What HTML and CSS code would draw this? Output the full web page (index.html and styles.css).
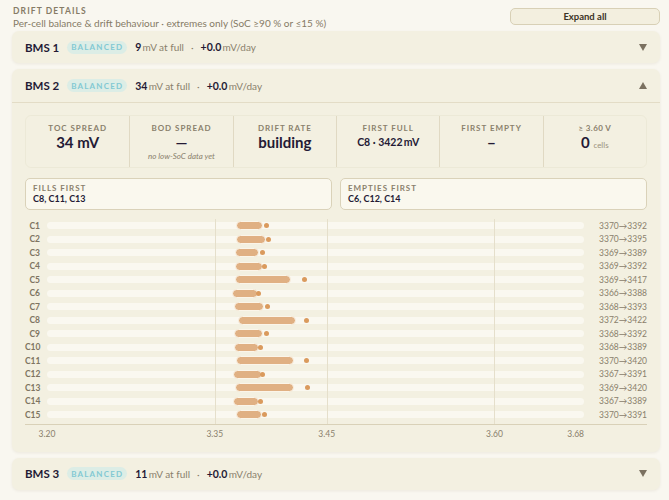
FILE: index.html
```html
<!DOCTYPE html>
<html lang="en">
<head>
    <meta charset="UTF-8">
    <meta name="viewport" content="width=device-width, initial-scale=1.0">
    <title>Drift details</title>
    <link rel="stylesheet" href="styles.css">
</head>
<body>
<section class="drift">
    <div class="drift-head">
        <div>
            <div class="eyebrow">Drift details</div>
            <div class="subtitle">Per-cell balance &amp; drift behaviour · extremes only (SoC ≥90 % or ≤15 %)</div>
        </div>
        <button class="expand-btn">Expand all</button>
    </div>

    <!-- BMS 1 (collapsed) -->
    <div class="bms-card">
        <div class="bms-header">
            <span class="bms-name">BMS 1</span>
            <span class="badge">BALANCED</span>
            <span class="metric"><b>9</b>&#8201;mV at full</span>
            <span class="sep">·</span>
            <span class="metric"><b>+0.0</b>&#8201;mV/day</span>
            <svg class="chevron" width="8" height="7" viewBox="0 0 8 7"><polygon points="0,0 8,0 4,7"/></svg>
        </div>
    </div>

    <!-- BMS 2 (expanded) -->
    <div class="bms-card">
        <div class="bms-header open">
            <span class="bms-name">BMS 2</span>
            <span class="badge">BALANCED</span>
            <span class="metric"><b>34</b>&#8201;mV at full</span>
            <span class="sep">·</span>
            <span class="metric"><b>+0.0</b>&#8201;mV/day</span>
            <svg class="chevron" width="8" height="7" viewBox="0 0 8 7"><polygon points="0,7 8,7 4,0"/></svg>
        </div>
        <div class="bms-body">
            <div class="stats">
                <div class="stat">
                    <div class="stat-label">TOC spread</div>
                    <div class="stat-value">34 mV</div>
                </div>
                <div class="stat">
                    <div class="stat-label">BOD spread</div>
                    <div class="stat-value">—</div>
                    <div class="stat-note">no low-SoC data yet</div>
                </div>
                <div class="stat">
                    <div class="stat-label">Drift rate</div>
                    <div class="stat-value">building</div>
                </div>
                <div class="stat">
                    <div class="stat-label">First full</div>
                    <div class="stat-value small">C8 · 3422&#8201;mV</div>
                </div>
                <div class="stat">
                    <div class="stat-label">First empty</div>
                    <div class="stat-value dash">–</div>
                </div>
                <div class="stat">
                    <div class="stat-label plain">≥ 3.60 V</div>
                    <div class="stat-value">0 <span class="unit">cells</span></div>
                </div>
            </div>

            <div class="extremes">
                <div class="extreme">
                    <div class="extreme-label">Fills first</div>
                    <div class="extreme-cells">C8, C11, C13</div>
                </div>
                <div class="extreme">
                    <div class="extreme-label">Empties first</div>
                    <div class="extreme-cells">C6, C12, C14</div>
                </div>
            </div>

            <div class="chart">
                <div class="rows">
                    <div class="gridlines">
                        <span style="left: 31.25%"></span>
                        <span style="left: 52.083%"></span>
                        <span style="left: 83.333%"></span>
                    </div>
                    <div class="cell-row"><span class="cell-id">C1</span><div class="track"><div class="bar" style="left: 35.417%; width: 4.583%"></div><div class="dot" style="left: 40.833%"></div></div><span class="cell-range">3370→3392</span></div>
                    <div class="cell-row"><span class="cell-id">C2</span><div class="track"><div class="bar" style="left: 35.417%; width: 5.208%"></div><div class="dot" style="left: 41.25%"></div></div><span class="cell-range">3370→3395</span></div>
                    <div class="cell-row"><span class="cell-id">C3</span><div class="track"><div class="bar" style="left: 35.208%; width: 4.167%"></div><div class="dot" style="left: 40.208%"></div></div><span class="cell-range">3369→3389</span></div>
                    <div class="cell-row"><span class="cell-id">C4</span><div class="track"><div class="bar" style="left: 35.208%; width: 4.792%"></div><div class="dot" style="left: 40.417%"></div></div><span class="cell-range">3369→3392</span></div>
                    <div class="cell-row"><span class="cell-id">C5</span><div class="track"><div class="bar" style="left: 35.208%; width: 10%"></div><div class="dot" style="left: 47.917%"></div></div><span class="cell-range">3369→3417</span></div>
                    <div class="cell-row"><span class="cell-id">C6</span><div class="track"><div class="bar" style="left: 34.583%; width: 4.583%"></div><div class="dot" style="left: 39.375%"></div></div><span class="cell-range">3366→3388</span></div>
                    <div class="cell-row"><span class="cell-id">C7</span><div class="track"><div class="bar" style="left: 35%; width: 5.208%"></div><div class="dot" style="left: 41.042%"></div></div><span class="cell-range">3368→3393</span></div>
                    <div class="cell-row"><span class="cell-id">C8</span><div class="track"><div class="bar" style="left: 35.833%; width: 10.417%"></div><div class="dot" style="left: 48.333%"></div></div><span class="cell-range">3372→3422</span></div>
                    <div class="cell-row"><span class="cell-id">C9</span><div class="track"><div class="bar" style="left: 35%; width: 5%"></div><div class="dot" style="left: 40.833%"></div></div><span class="cell-range">3368→3392</span></div>
                    <div class="cell-row"><span class="cell-id">C10</span><div class="track"><div class="bar" style="left: 35%; width: 4.375%"></div><div class="dot" style="left: 39.792%"></div></div><span class="cell-range">3368→3389</span></div>
                    <div class="cell-row"><span class="cell-id">C11</span><div class="track"><div class="bar" style="left: 35.417%; width: 10.417%"></div><div class="dot" style="left: 48.333%"></div></div><span class="cell-range">3370→3420</span></div>
                    <div class="cell-row"><span class="cell-id">C12</span><div class="track"><div class="bar" style="left: 34.792%; width: 5%"></div><div class="dot" style="left: 40.208%"></div></div><span class="cell-range">3367→3391</span></div>
                    <div class="cell-row"><span class="cell-id">C13</span><div class="track"><div class="bar" style="left: 35.208%; width: 10.625%"></div><div class="dot" style="left: 48.542%"></div></div><span class="cell-range">3369→3420</span></div>
                    <div class="cell-row"><span class="cell-id">C14</span><div class="track"><div class="bar" style="left: 34.792%; width: 4.583%"></div><div class="dot" style="left: 39.792%"></div></div><span class="cell-range">3367→3389</span></div>
                    <div class="cell-row"><span class="cell-id">C15</span><div class="track"><div class="bar" style="left: 35.417%; width: 4.375%"></div><div class="dot" style="left: 40.417%"></div></div><span class="cell-range">3370→3391</span></div>
                </div>
                <div class="axis">
                    <div class="ticks">
                        <span style="left: 0%">3.20</span>
                        <span style="left: 31.25%">3.35</span>
                        <span style="left: 52.083%">3.45</span>
                        <span style="left: 83.333%">3.60</span>
                        <span class="last" style="left: 100%">3.68</span>
                    </div>
                </div>
            </div>
        </div>
    </div>

    <!-- BMS 3 (collapsed) -->
    <div class="bms-card">
        <div class="bms-header">
            <span class="bms-name">BMS 3</span>
            <span class="badge">BALANCED</span>
            <span class="metric"><b>11</b>&#8201;mV at full</span>
            <span class="sep">·</span>
            <span class="metric"><b>+0.0</b>&#8201;mV/day</span>
            <svg class="chevron" width="8" height="7" viewBox="0 0 8 7"><polygon points="0,0 8,0 4,7"/></svg>
        </div>
    </div>
</section>
</body>
</html>
```

FILE: styles.css
```css
body {
    margin: 0;
    background: #f9f7f0;
    font-family: Lato, "Open Sans", sans-serif;
    color: #261c36;
}
.drift {
    padding: 5px 9px 10px 12px;
}
.drift-head {
    display: flex;
    justify-content: space-between;
    align-items: flex-start;
    margin-bottom: 1px;
}
.eyebrow {
    font-size: 8.5px;
    line-height: 12px;
    font-weight: 700;
    letter-spacing: 0.13em;
    text-transform: uppercase;
    color: #867b66;
    padding-left: 1px;
}
.subtitle {
    font-size: 10px;
    line-height: 13px;
    color: #867b66;
    padding-left: 1px;
}
.expand-btn {
    margin-top: 3px;
    width: 150px;
    height: 17px;
    padding: 0;
    background: #f3efdf;
    border: 1px solid #d8d0b6;
    border-radius: 5px;
    font-family: inherit;
    font-size: 9.5px;
    font-weight: 700;
    color: #3b3326;
}
.bms-card {
    background: #f3f0e1;
    border-radius: 7px;
    box-shadow: 0 1px 3px rgba(90, 70, 30, 0.08);
    margin-bottom: 6px;
}
.bms-header {
    display: flex;
    align-items: center;
    height: 32px;
    padding: 0 13px;
}
.bms-header.open {
    height: 33px;
    border-bottom: 1px solid #e3dcc6;
}
.bms-name {
    font-size: 11.5px;
    font-weight: 700;
    color: #241a35;
    margin-right: 8px;
}
.badge {
    display: inline-flex;
    align-items: center;
    justify-content: center;
    width: 60px;
    height: 13px;
    border-radius: 7px;
    background: #dcede6;
    color: #82c9d3;
    font-size: 8px;
    font-weight: 700;
    letter-spacing: 0.15em;
    margin-right: 8px;
}
.metric {
    font-size: 10px;
    color: #8a806c;
}
.metric b {
    font-size: 10.5px;
    color: #241a35;
}
.sep {
    font-size: 10px;
    color: #8a806c;
    margin: 0 7px;
}
.chevron {
    margin-left: auto;
    fill: #7b7160;
}
.bms-body {
    padding: 12px 13px 12px;
}
.stats {
    display: grid;
    grid-template-columns: repeat(6, 1fr);
    height: 53px;
    border: 1px solid rgba(160, 140, 90, 0.07);
    border-radius: 6px;
    box-sizing: border-box;
}
.stat {
    display: flex;
    flex-direction: column;
    align-items: center;
    padding-top: 7px;
}
.stat + .stat {
    border-left: 1px solid #e0d9c3;
}
.stat-label {
    font-size: 8px;
    line-height: 10px;
    font-weight: 700;
    letter-spacing: 0.12em;
    text-transform: uppercase;
    color: #8a806c;
}
.stat-label.plain {
    letter-spacing: 0.05em;
}
.stat-value {
    font-size: 15px;
    line-height: 18px;
    font-weight: 700;
    color: #241a35;
}
.stat-value.small {
    font-size: 10.5px;
}
.stat-value.dash {
    font-size: 16px;
}
.stat-value .unit {
    font-size: 8px;
    font-weight: 400;
    color: #9a907c;
}
.stat-note {
    font-size: 8px;
    line-height: 10px;
    font-style: italic;
    color: #8a806c;
}
.extremes {
    display: grid;
    grid-template-columns: 1fr 1fr;
    gap: 8px;
    margin-top: 10px;
}
.extreme {
    background: #faf8ee;
    border: 1px solid #dad2b9;
    border-radius: 5px;
    padding: 4px 7px;
}
.extreme-label {
    font-size: 8px;
    line-height: 10px;
    font-weight: 700;
    letter-spacing: 0.12em;
    text-transform: uppercase;
    color: #8a806c;
}
.extreme-cells {
    font-size: 9px;
    line-height: 12px;
    font-weight: 700;
    color: #241a35;
}
.chart {
    margin-top: 9px;
}
.rows {
    position: relative;
    padding-bottom: 2px;
}
.gridlines {
    position: absolute;
    top: 0;
    bottom: 0;
    left: 22px;
    right: 63px;
    z-index: 1;
}
.gridlines span {
    position: absolute;
    top: 0;
    bottom: 0;
    width: 1px;
    background: #e5dfcb;
}
.cell-row {
    display: grid;
    grid-template-columns: 15px 1fr 56px;
    column-gap: 7px;
    align-items: center;
    height: 13.5px;
}
.cell-id {
    font-size: 8.5px;
    font-weight: 700;
    color: #7e7462;
    text-align: right;
    white-space: nowrap;
}
.track {
    position: relative;
    height: 7px;
    border-radius: 4px;
    background: #faf8f0;
}
.bar {
    position: absolute;
    top: -1px;
    height: 7px;
    border: 1px solid #fbf5e9;
    border-radius: 5px;
    background: #e0b083;
    z-index: 2;
    box-sizing: content-box;
    margin-left: -1px;
}
.dot {
    position: absolute;
    top: 1px;
    width: 5px;
    height: 5px;
    margin-left: -2.5px;
    border-radius: 50%;
    background: #da9a5d;
    z-index: 2;
}
.cell-range {
    font-size: 8.5px;
    color: #8a806c;
    text-align: right;
    white-space: nowrap;
}
.axis {
    border-top: 1.5px solid #d9d1b8;
    height: 15px;
    position: relative;
}
.ticks {
    position: absolute;
    top: 3px;
    left: 22px;
    right: 63px;
    height: 12px;
}
.ticks span {
    position: absolute;
    transform: translateX(-50%);
    font-size: 8.5px;
    line-height: 12px;
    color: #8a806c;
}
.ticks span.last {
    transform: translateX(-100%);
}
```
